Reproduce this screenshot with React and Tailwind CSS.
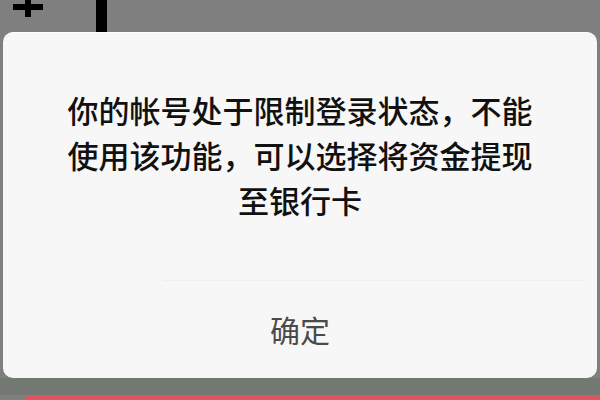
import React from 'react';

const cjk = { fontFamily: '"Noto Sans CJK SC", "Noto Sans", sans-serif' };

// 顶部被遮住的工具栏
const TopBar = () => (
  <div className="relative h-[32px] shrink-0">
    <svg className="absolute left-[13px] top-0" width="30" height="17" viewBox="0 0 30 17">
      <rect x="0" y="4" width="30" height="6" fill="#000" />
      <rect x="12" y="0" width="6" height="17" fill="#000" />
    </svg>
    <div className="absolute left-[96px] top-0 h-[32px] w-[11px] bg-black" />
  </div>
);

export default function App() {
  return (
    <div className="flex h-[400px] w-[600px] flex-col overflow-hidden bg-[#7f7f7f]" style={cjk}>
      <TopBar />

      {/* 提示弹窗 */}
      <div className="mx-[3px] flex h-[346px] shrink-0 flex-col rounded-[10px] border-t border-white bg-[#f7f7f7]">
        <div className="h-[247px] shrink-0 pt-[54px]">
          <p className="mx-auto w-[470px] text-center text-[31px] font-medium leading-[45px] text-[#111111]">
            你的帐号处于限制登录状态，不能使用该功能，可以选择将资金提现至银行卡
          </p>
        </div>
        <div className="ml-[160px] mr-[15px] h-px bg-[#efefef]" />
        <div className="flex flex-1 items-center justify-center">
          <span className="text-[30px] text-[#4a4a4a]">确定</span>
        </div>
      </div>

      <div className="h-[17px] shrink-0 bg-[#737873]" />
      <div className="ml-[25px] flex-1 bg-[#dc5560]" />
    </div>
  );
}
